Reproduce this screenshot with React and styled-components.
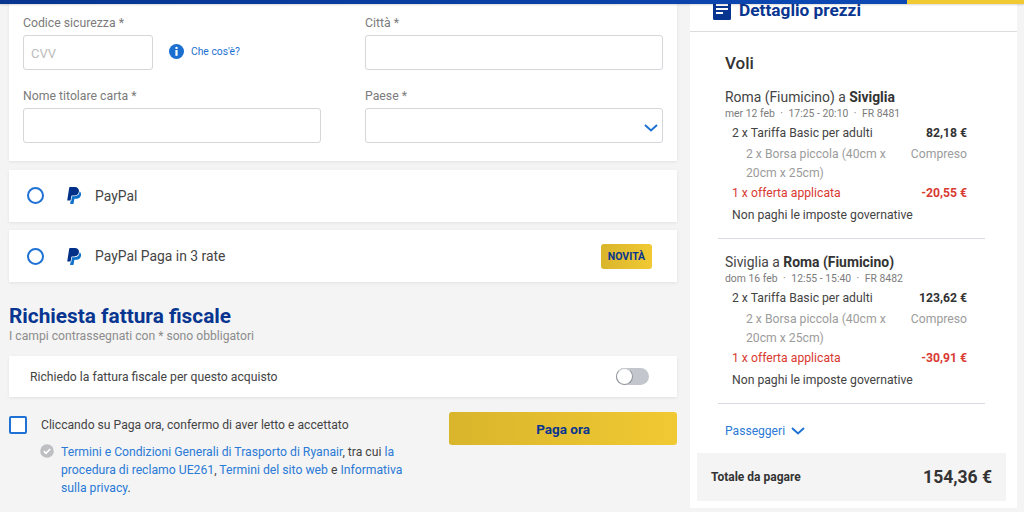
import React from "react";
import styled, { createGlobalStyle } from "styled-components";

const GlobalStyle = createGlobalStyle`
  html, body {
    margin: 0;
    padding: 0;
    width: 1024px;
    height: 512px;
    overflow: hidden;
    background: #f4f4f4;
    font-family: Roboto, "Liberation Sans", sans-serif;
  }
  * {
    box-sizing: border-box;
  }
`;

const Page = styled.div`
  position: relative;
  display: flex;
  align-items: flex-start;
  gap: 13px;
  width: 1024px;
  height: 512px;
  padding-left: 9px;
  overflow: hidden;
`;

const TopBar = styled.div`
  position: absolute;
  top: 0;
  left: 0;
  right: 0;
  height: 4px;
  z-index: 2;
  background: linear-gradient(to right, #073590 0, #0d49b5 907px, #f1c933 907px);
  box-shadow: 0 1px 2px rgba(0, 0, 0, 0.15);
`;

const Main = styled.div`
  width: 668px;
  flex-shrink: 0;
`;

const FormCard = styled.div`
  display: grid;
  grid-template-columns: 298px 298px;
  column-gap: 44px;
  row-gap: 18px;
  padding: 15px 14px 18px;
  background: #fff;
  box-shadow: 0 1px 3px rgba(0, 0, 0, 0.08);
`;

const Field = styled.div`
  display: flex;
  flex-direction: column;
  gap: 4px;
`;

const Label = styled.label`
  font-size: 12.25px;
  line-height: 16px;
  color: #7b7b7b;
`;

const CvvRow = styled.div`
  display: flex;
  align-items: center;
  gap: 16px;
`;

const InputBox = styled.div`
  position: relative;
  display: flex;
  align-items: center;
  width: ${({ $width }) => $width || "100%"};
  height: 35px;
  padding: 2px 7px 0;
  background: #fff;
  border: 1px solid #d5d6da;
  border-radius: 3px;
  font-size: 13px;
  color: #bcbcbc;
`;

const SelectChevron = styled.svg`
  position: absolute;
  right: 4px;
  bottom: 10px;
  width: 14px;
  height: 8px;
`;

const HelpLink = styled.a`
  display: flex;
  align-items: center;
  gap: 7px;
  margin-top: -3px;
  font-size: 10.3px;
  color: #1a6fd0;
`;

const PayRow = styled.div`
  display: flex;
  align-items: center;
  height: 52px;
  margin-top: 8.5px;
  padding: 0 25px 0 18px;
  background: #fff;
  box-shadow: 0 1px 3px rgba(0, 0, 0, 0.08);
  font-size: 13.9px;
  color: #444;
`;

const Radio = styled.span`
  width: 17px;
  height: 17px;
  margin-right: 23px;
  border: 2px solid #1f72d3;
  border-radius: 50%;
`;

const PayName = styled.span`
  margin-left: 13px;
  flex: 1;
`;

const Badge = styled.span`
  display: flex;
  align-items: center;
  justify-content: center;
  width: 51px;
  height: 25px;
  border-radius: 3px;
  background: linear-gradient(to right, #d9b52c, #f1c933);
  font-size: 10.5px;
  font-weight: 700;
  color: #073590;
`;

const InvoiceTitle = styled.h2`
  margin: 21px 0 0;
  font-size: 20.8px;
  line-height: 26px;
  font-weight: 700;
  color: #073590;
`;

const InvoiceNote = styled.p`
  margin: 0;
  font-size: 12.15px;
  line-height: 14px;
  color: #8c8c8c;
`;

const ToggleRow = styled.div`
  display: flex;
  align-items: center;
  justify-content: space-between;
  height: 41px;
  margin-top: 13px;
  padding: 0 28px 0 21px;
  background: #fff;
  box-shadow: 0 1px 3px rgba(0, 0, 0, 0.08);
  font-size: 12.2px;
  color: #444;
`;

const Toggle = styled.span`
  display: flex;
  align-items: center;
  width: 33px;
  height: 17px;
  border-radius: 9px;
  background: #c3c6cc;
`;

const Knob = styled.span`
  width: 17px;
  height: 17px;
  border-radius: 50%;
  background: #fff;
  border: 1.5px solid #8f929a;
  border-top-color: #c3c6cc;
`;

const ConsentRow = styled.div`
  display: flex;
  justify-content: space-between;
  margin-top: 15px;
`;

const Consent = styled.div`
  width: 400px;
`;

const ConsentHead = styled.div`
  display: flex;
  align-items: center;
  gap: 14px;
  margin-top: 4px;
  font-size: 12.15px;
  line-height: 17px;
  color: #444;
`;

const Checkbox = styled.span`
  width: 18px;
  height: 18px;
  background: #fff;
  border: 2px solid #1f72d3;
  border-radius: 2px;
`;

const Terms = styled.div`
  display: flex;
  gap: 7px;
  margin: 9px 0 0 31px;
  font-size: 12.2px;
  line-height: 18px;
  color: #444;
`;

const TermsText = styled.p`
  margin: 0;
  width: 345px;
`;

const TextLink = styled.a`
  color: #2a7ad6;
`;

const PayButton = styled.button`
  width: 228px;
  height: 33px;
  padding-top: 2px;
  border: none;
  border-radius: 3px;
  background: linear-gradient(to right, #d9b52c, #f1c933);
  font-family: inherit;
  font-size: 13.5px;
  font-weight: 700;
  color: #073590;
`;

const Summary = styled.aside`
  width: 327px;
  height: 508px;
  padding-bottom: 7px;
  flex-shrink: 0;
  display: flex;
  flex-direction: column;
  background: #fff;
`;

const SummaryHead = styled.header`
  display: flex;
  align-items: center;
  gap: 8px;
  height: 32px;
  padding: 0 0 11px 23px;
  border-bottom: 1px solid #dcdcdc;
  font-size: 17.3px;
  font-weight: 700;
  color: #073590;
`;

const Breakdown = styled.div`
  padding: 21px 32px 0 35px;
  flex: 1;
`;

const SectionTitle = styled.h3`
  margin: 0 0 15px;
  font-size: 17px;
  line-height: 20px;
  font-weight: 500;
  color: #333;
`;

const Route = styled.div`
  font-size: 13.9px;
  line-height: 18px;
  color: #444;
  b {
    font-weight: 700;
    color: #333;
  }
`;

const Meta = styled.div`
  display: flex;
  gap: 5.5px;
  margin: 1px 0 4px;
  font-size: 10.4px;
  line-height: 13px;
  color: #7b7b7b;
`;

const Line = styled.div`
  display: flex;
  justify-content: space-between;
  padding: 0 18px 0 ${({ $indent }) => ($indent ? "21px" : "7px")};
  margin-top: ${({ $gap }) => $gap || 0}px;
  font-size: 12.2px;
  line-height: 19px;
  color: ${({ $tone }) => ($tone === "muted" ? "#9c9c9c" : $tone === "red" ? "#d93a32" : "#444")};
`;

const LineName = styled.span`
  max-width: ${({ $wrap }) => ($wrap ? "150px" : "none")};
`;

const Amount = styled.span`
  font-weight: ${({ $plain }) => ($plain ? 400 : 700)};
  color: ${({ $plain, $tone }) => ($plain ? "inherit" : $tone === "red" ? "#d93a32" : "#333")};
`;

const Divider = styled.hr`
  margin: 13px 0 14px -7px;
  border: none;
  border-top: 1px solid #d9dae3;
`;

const Passengers = styled.a`
  display: flex;
  align-items: center;
  gap: 6px;
  margin-top: 18px;
  font-size: 12.1px;
  line-height: 18px;
  color: #2a7ad6;
`;

const TotalBox = styled.div`
  display: flex;
  align-items: center;
  justify-content: space-between;
  height: 48px;
  margin: 0 11px 0 7px;
  padding: 0 14px;
  background: #f4f4f4;
`;

const TotalLabel = styled.span`
  font-size: 12px;
  font-weight: 700;
  color: #333;
`;

const TotalValue = styled.span`
  font-size: 17.5px;
  font-weight: 700;
  color: #333;
`;

const PayPalIcon = () => (
  <svg width="15" height="17" viewBox="2 0 21 24">
    <path
      fill="#003087"
      d="M7.016 19.198h-4.2a.562.562 0 0 1-.555-.65L5.093.584A.692.692 0 0 1 5.776 0h7.222c3.417 0 5.904 2.488 5.846 5.5-.006.25-.027.5-.066.747A6.794 6.794 0 0 1 12.071 12H8.743a.69.69 0 0 0-.682.583l-.325 2.056-.013.083-.692 4.39-.015.087z"
    />
    <path
      fill="#0a70c9"
      d="M19.79 6.142c-.01.087-.01.175-.023.261a7.76 7.76 0 0 1-7.695 6.559H9.007l-.283 1.795-.013.083-.692 4.39-.134.843-.014.088H6.86l-.497 3.15a.562.562 0 0 0 .555.65h3.612c.34 0 .63-.249.683-.585l.952-6.031a.692.692 0 0 1 .683-.584h2.126a6.793 6.793 0 0 0 6.707-5.752c.306-1.95-.466-3.744-1.89-4.867z"
    />
  </svg>
);

const InfoIcon = () => (
  <svg width="15" height="15" viewBox="0 0 15 15">
    <circle cx="7.5" cy="7.5" r="7.5" fill="#1a6fd0" />
    <circle cx="7.5" cy="3.9" r="1.2" fill="#fff" />
    <rect x="6.4" y="6" width="2.2" height="5.8" fill="#fff" />
  </svg>
);

const CheckIcon = () => (
  <svg width="14" height="14" viewBox="0 0 14 14" style={{ flexShrink: 0, marginTop: 1 }}>
    <circle cx="7" cy="7" r="6.8" fill="#bdbfc3" />
    <path d="M3.8 7.2l2.2 2.2 4.2-4.4" fill="none" stroke="#fff" strokeWidth="1.7" />
  </svg>
);

const ListIcon = () => (
  <svg width="18" height="20" viewBox="0 0 18 20">
    <rect width="18" height="20" rx="1.5" fill="#073590" />
    <path d="M3 4h12v2H3zM3 8h12v2H3zM3 12h7v2H3z" fill="#fff" />
  </svg>
);

const Chevron = ({ as: Wrap = "svg", ...rest }) => (
  <Wrap viewBox="0 0 14 8" {...rest}>
    <path d="M1 1l6 5.5L13 1" fill="none" stroke="#1f72d3" strokeWidth="2" />
  </Wrap>
);

const legs = [
  {
    from: "Roma (Fiumicino) a ",
    to: "Siviglia",
    meta: ["mer 12 feb", "·", "17:25 - 20:10", "·", "FR 8481"],
    fare: "82,18 €",
    discount: "-20,55 €",
  },
  {
    from: "Siviglia a ",
    to: "Roma (Fiumicino)",
    meta: ["dom 16 feb", "·", "12:55 - 15:40", "·", "FR 8482"],
    fare: "123,62 €",
    discount: "-30,91 €",
  },
];

const Leg = ({ leg }) => (
  <div>
    <Route>
      {leg.from}
      <b>{leg.to}</b>
    </Route>
    <Meta>
      {leg.meta.map((part, i) => (
        <span key={i}>{part}</span>
      ))}
    </Meta>
    <Line>
      <LineName>2 x Tariffa Basic per adulti</LineName>
      <Amount>{leg.fare}</Amount>
    </Line>
    <Line $indent $tone="muted" $gap={2}>
      <LineName $wrap>2 x Borsa piccola (40cm x 20cm x 25cm)</LineName>
      <Amount $plain>Compreso</Amount>
    </Line>
    <Line $tone="red" $gap={1}>
      <LineName>1 x offerta applicata</LineName>
      <Amount $tone="red">{leg.discount}</Amount>
    </Line>
    <Line $gap={3}>
      <LineName>Non paghi le imposte governative</LineName>
    </Line>
  </div>
);

export default function App() {
  return (
    <Page>
      <GlobalStyle />
      <TopBar />
      <Main>
        <FormCard>
          <Field>
            <Label>Codice sicurezza *</Label>
            <CvvRow>
              <InputBox $width="130px">CVV</InputBox>
              <HelpLink>
                <InfoIcon />
                Che cos'è?
              </HelpLink>
            </CvvRow>
          </Field>
          <Field>
            <Label>Città *</Label>
            <InputBox />
          </Field>
          <Field>
            <Label>Nome titolare carta *</Label>
            <InputBox />
          </Field>
          <Field>
            <Label>Paese *</Label>
            <InputBox>
              <Chevron as={SelectChevron} />
            </InputBox>
          </Field>
        </FormCard>

        <PayRow>
          <Radio />
          <PayPalIcon />
          <PayName>PayPal</PayName>
        </PayRow>
        <PayRow>
          <Radio />
          <PayPalIcon />
          <PayName>PayPal Paga in 3 rate</PayName>
          <Badge>NOVITÀ</Badge>
        </PayRow>

        <InvoiceTitle>Richiesta fattura fiscale</InvoiceTitle>
        <InvoiceNote>I campi contrassegnati con * sono obbligatori</InvoiceNote>

        <ToggleRow>
          Richiedo la fattura fiscale per questo acquisto
          <Toggle>
            <Knob />
          </Toggle>
        </ToggleRow>

        <ConsentRow>
          <Consent>
            <ConsentHead>
              <Checkbox />
              Cliccando su Paga ora, confermo di aver letto e accettato
            </ConsentHead>
            <Terms>
              <CheckIcon />
              <TermsText>
                <TextLink>Termini e Condizioni Generali di Trasporto di Ryanair</TextLink>, tra cui{" "}
                <TextLink>la procedura di reclamo UE261</TextLink>,{" "}
                <TextLink>Termini del sito web</TextLink> e{" "}
                <TextLink>Informativa sulla privacy</TextLink>.
              </TermsText>
            </Terms>
          </Consent>
          <PayButton>Paga ora</PayButton>
        </ConsentRow>
      </Main>

      <Summary>
        <SummaryHead>
          <ListIcon />
          Dettaglio prezzi
        </SummaryHead>
        <Breakdown>
          <SectionTitle>Voli</SectionTitle>
          <Leg leg={legs[0]} />
          <Divider />
          <Leg leg={legs[1]} />
          <Divider />
          <Passengers>
            Passeggeri
            <Chevron width="14" height="8" />
          </Passengers>
        </Breakdown>
        <TotalBox>
          <TotalLabel>Totale da pagare</TotalLabel>
          <TotalValue>154,36 €</TotalValue>
        </TotalBox>
      </Summary>
    </Page>
  );
}
